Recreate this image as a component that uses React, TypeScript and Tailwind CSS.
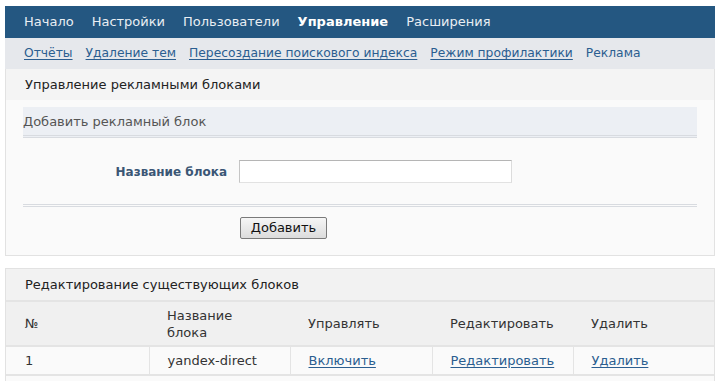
export default function App() {
  const navItems = ["Начало", "Настройки", "Пользователи", "Управление", "Расширения"]
  const subItems = ["Отчёты", "Удаление тем", "Пересоздание поискового индекса", "Режим профилактики"]

  return (
    <div className="min-h-[381px] bg-white px-[5px] pt-[6px] font-['DejaVu_Sans',sans-serif] text-[13px] text-[#333]">
      {/* top navigation */}
      <div className="flex h-[32px] items-center gap-[18px] bg-[#245781] pl-[19px] text-[#e9eef3]">
        {navItems.map((item) => (
          <span key={item} className={item === "Управление" ? "font-bold text-white" : ""}>
            {item}
          </span>
        ))}
      </div>
      <div className="flex h-[31px] items-center gap-[13px] bg-[#e6e8ec] pl-[19px] text-[12.3px]">
        {subItems.map((item) => (
          <a key={item} className="text-[#2b5e90] underline underline-offset-2">
            {item}
          </a>
        ))}
        <span className="text-[#2b5e90]">Реклама</span>
      </div>

      {/* add block panel */}
      <div className="border-x border-b border-[#e2e2e2] bg-[#fafafa]">
        <div className="flex h-[31px] items-center bg-[#f4f4f4] pl-[19px] text-[#222]">
          Управление рекламными блоками
        </div>
        <div className="px-[17px] pb-[16px] pt-[7px]">
          <div className="flex h-[31px] items-center border-b-[3px] border-double border-[#d8dbe0] bg-[#eceff4] pt-[2px] text-[#555]">
            Добавить рекламный блок
          </div>
          <div className="flex items-center pb-[21px] pt-[22px]">
            <div className="w-[216px] pr-[12px] text-right text-[12px] font-bold text-[#3a5675]">Название блока</div>
            <input className="h-[23px] w-[273px] border border-t-[#b5b5b5] border-l-[#c5c5c5] border-r-[#dcdcdc] border-b-[#e2e2e2] bg-white" />
          </div>
          <div className="border-b-[3px] border-double border-[#d8dbe0]" />
          <div className="pl-[217px] pt-[10px]">
            <button className="h-[22px] w-[87px] rounded-[2px] border border-[#7a7a7a] bg-gradient-to-b from-[#f6f6f6] to-[#dcdcdc] text-[13px] text-[#111]">
              Добавить
            </button>
          </div>
        </div>
      </div>

      {/* existing blocks */}
      <div className="mt-[12px] border border-[#e2e2e2] bg-[#fafafa]">
        <div className="flex h-[31px] items-center bg-[#f2f2f2] pl-[19px] text-[#222]">
          Редактирование существующих блоков
        </div>
        <table className="w-full border-collapse text-left">
          <thead>
            <tr className="h-[45px] border-y-2 border-[#e4e4e4] bg-[#f0f0f0] text-[#333]">
              <th className="w-[143px] pl-[19px] font-normal">№</th>
              <th className="w-[141px] pl-[18px] font-normal leading-[17px]">
                Название
                <br />
                блока
              </th>
              <th className="w-[142px] pl-[18px] font-normal">Управлять</th>
              <th className="w-[141px] pl-[18px] font-normal">Редактировать</th>
              <th className="pl-[18px] font-normal">Удалить</th>
            </tr>
          </thead>
          <tbody>
            <tr className="h-[29px] border-b-2 border-[#e4e4e4] bg-[#fafafa]">
              <td className="border-r border-[#e4e4e4] pl-[19px]">1</td>
              <td className="border-r border-[#e4e4e4] pl-[18px]">yandex-direct</td>
              <td className="border-r border-[#e4e4e4] pl-[18px]">
                <a className="text-[#2b5e90] underline underline-offset-2">Включить</a>
              </td>
              <td className="border-r border-[#e4e4e4] pl-[18px]">
                <a className="text-[#2b5e90] underline underline-offset-2">Редактировать</a>
              </td>
              <td className="pl-[18px]">
                <a className="text-[#2b5e90] underline underline-offset-2">Удалить</a>
              </td>
            </tr>
          </tbody>
        </table>
        <div className="h-[8px]" />
      </div>
    </div>
  )
}
